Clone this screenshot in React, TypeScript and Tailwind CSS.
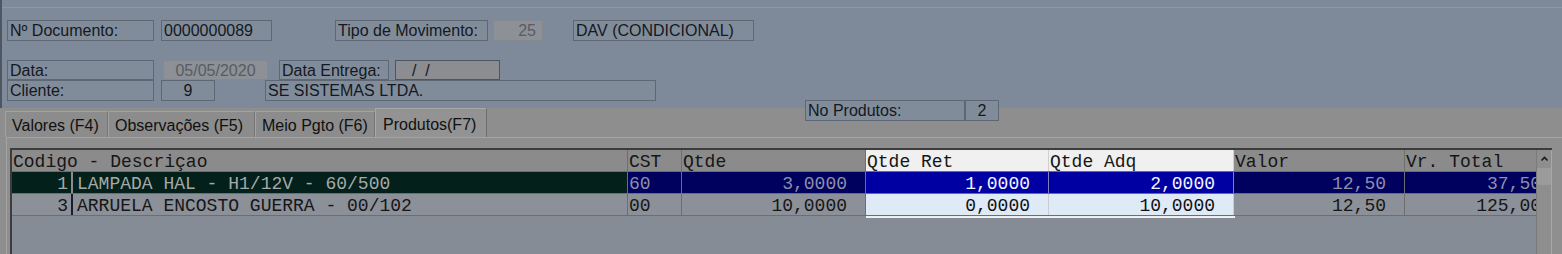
const Box = ({
  w,
  h = 21,
  ml = 0,
  children,
  variant = "label",
  align = "left",
}: {
  w: number;
  h?: number;
  ml?: number;
  children?: React.ReactNode;
  variant?: "label" | "disabled" | "input";
  align?: "left" | "right" | "center";
}) => {
  const styles = {
    label: "bg-[#818c9b] border-[#5f6774] text-[#141820]",
    disabled: "bg-[#8d9096] border-[#858a92] text-[#575c64]",
    input: "bg-[#8b8d90] border-[#4f5560] text-[#141820]",
  }[variant];
  const al = { left: "justify-start pl-[2px]", right: "justify-end pr-[6px]", center: "justify-center" }[align];
  return (
    <div
      className={`flex items-center pt-px border whitespace-nowrap overflow-hidden leading-none text-[16px] ${styles} ${al}`}
      style={{ width: w, height: h, marginLeft: ml }}
    >
      {children}
    </div>
  );
};

const cols = [
  { key: "cst", title: "CST", w: 54 },
  { key: "qtde", title: "Qtde", w: 184 },
  { key: "ret", title: "Qtde Ret", w: 183, hi: true },
  { key: "adq", title: "Qtde Adq", w: 185, hi: true },
  { key: "valor", title: "Valor", w: 171 },
  { key: "total", title: "Vr. Total", w: 151 },
];

const rows = [
  { cod: "1", desc: "LAMPADA HAL - H1/12V - 60/500", cst: "60", qtde: "3,0000", ret: "1,0000", adq: "2,0000", valor: "12,50", total: "37,50" },
  { cod: "3", desc: "ARRUELA ENCOSTO GUERRA - 00/102", cst: "00", qtde: "10,0000", ret: "0,0000", adq: "10,0000", valor: "12,50", total: "125,00" },
];

const tabs = [
  { t: "Valores (F4)", w: 103 },
  { t: "Observações (F5)", w: 147 },
  { t: "Meio Pgto (F6)", w: 120 },
];

export default function App() {
  return (
    <div className="relative w-[1562px] h-[254px] overflow-hidden bg-[#8e8e8e] font-['Liberation_Sans',Arial,sans-serif]">
      {/* cabeçalho do documento */}
      <div className="h-[108px] bg-[#7e899a] border-l-2 border-[#4e5664]">
        <div className="pt-[7px]">
          <div className="h-px bg-[#8d97a6]" />
        </div>
        <div className="flex mt-[12px] ml-[5px]">
          <Box w={147}>Nº Documento:</Box>
          <Box w={111} ml={7}>0000000089</Box>
          <Box w={153} ml={63}>Tipo de Movimento:</Box>
          <Box w={50} ml={5} variant="disabled" align="right">25</Box>
          <Box w={181} ml={30}>DAV (CONDICIONAL)</Box>
        </div>
        <div className="flex mt-[19px] ml-[5px]">
          <Box w={147} h={20}>Data:</Box>
          <Box w={105} h={20} ml={9} variant="disabled" align="center">05/05/2020</Box>
          <Box w={110} h={20} ml={11}>Data Entrega:</Box>
          <Box w={105} h={20} ml={6} variant="input">
            <span className="pl-[14px]">/&nbsp;&nbsp;/</span>
          </Box>
        </div>
        <div className="flex ml-[5px]">
          <Box w={147}>Cliente:</Box>
          <Box w={54} ml={7} align="center">9</Box>
          <Box w={391} ml={50}>SE SISTEMAS LTDA.</Box>
        </div>
      </div>

      {/* No Produtos */}
      <div className="absolute top-[100px] left-[805px] flex">
        <Box w={160}>No Produtos:</Box>
        <Box w={34} align="center">2</Box>
      </div>

      {/* abas */}
      <div className="h-[29px] flex items-end pl-[5px] text-[16px] text-[#101010]">
        {tabs.map((t) => (
          <div
            key={t.t}
            className="h-[26px] shrink-0 flex items-center pl-[6px] pt-[2px] border-t border-l border-r border-t-[#a2a2a2] border-l-[#a2a2a2] border-r-[#767676] bg-[#8c8c8c] whitespace-nowrap"
            style={{ width: t.w }}
          >
            {t.t}
          </div>
        ))}
        <div className="h-[29px] w-[112px] shrink-0 flex items-start pt-[4px] pl-[7px] border-t border-l border-r border-t-[#a8a8a8] border-l-[#a8a8a8] border-r-[#6e6e6e] bg-[#939393] whitespace-nowrap">
          Produtos(F7)
        </div>
      </div>

      {/* folha da aba */}
      <div className="ml-[6px] h-[117px] border-t border-l border-[#a4a4a4] bg-[#8f8f8f] pt-[10px] pl-[3px]">
        <div className="flex w-[1542px] h-[108px] border-t-2 border-l-2 border-[#3c3c3c] bg-[#868c95] font-['Liberation_Mono','Courier_New',monospace] text-[18px] leading-none">
          <div className="w-[1524px] overflow-hidden">
            {/* header */}
            <div className="flex h-[22px] bg-[#8b8b8b] text-[#161616] border-b border-[#6e6e6e]">
              <div className="w-[616px] shrink-0 flex items-center pt-[2px] pl-[1px] border-r border-[#6e6e6e] whitespace-pre">
                Codigo - Descriçao
              </div>
              {cols.map((c) => (
                <div
                  key={c.key}
                  className={`shrink-0 flex items-center pt-[2px] pl-[1px] border-r whitespace-pre ${
                    c.hi ? "bg-[#f0f0f0] border-[#d0d0d0]" : "border-[#6e6e6e]"
                  }`}
                  style={{ width: c.w }}
                >
                  {c.title}
                </div>
              ))}
            </div>
            {rows.map((r, i) => {
              const sel = i === 0;
              return (
                <div key={r.cod} className={`flex h-[22px] border-b border-[#6e6e6e] ${sel ? "" : "bg-[#8b9099] text-[#161616]"}`}>
                  <div className={`w-[616px] shrink-0 flex items-center border-r border-[#6e6e6e] whitespace-pre ${sel ? "bg-[#03201b] text-[#a6a9a8]" : ""}`}>
                    <span className={`w-[61px] shrink-0 h-full flex items-center pt-[2px] justify-end pr-[3px] border-r-2 ${sel ? "border-[#8c8c8c]" : "border-[#1b1e2a]"}`}>
                      {r.cod}
                    </span>
                    <span className="pl-[4px] pt-[2px]">{r.desc}</span>
                  </div>
                  {cols.map((c) => {
                    const v = r[c.key as keyof typeof r];
                    let cls = "";
                    if (sel) cls = c.hi ? "bg-[#0000a2] text-[#f4f4ff] border-[#8080c0]" : "bg-[#00005e] text-[#8e8fa6] border-[#6e6e6e]";
                    else cls = c.hi ? "bg-[#dfeaf7] text-[#101010] border-[#c8cdd4]" : "border-[#6e6e6e]";
                    const pad =
                      c.key === "cst" ? "justify-start pl-[1px]" : c.key === "total" ? "justify-end pr-[14px]" : "justify-end pr-[18px]";
                    return (
                      <div
                        key={c.key}
                        className={`shrink-0 flex items-center pt-[2px] border-r whitespace-pre ${pad} ${cls}`}
                        style={{ width: c.w }}
                      >
                        {v}
                      </div>
                    );
                  })}
                </div>
              );
            })}
            <div className="flex">
              <div className="w-[854px] shrink-0" />
              <div className="w-[369px] h-[2px] bg-[#f0f0f0]" />
            </div>
          </div>
          {/* barra de rolagem */}
          <div className="w-[15px] h-full bg-[#8e8e8e] border-l border-[#7a7a7a] flex flex-col items-center">
            <svg width="9" height="14" viewBox="0 0 9 14" className="mt-[2px]">
              <path d="M1.5 8.5 L4.5 5.5 L7.5 8.5" fill="none" stroke="#1a1a1a" strokeWidth="1.6" />
            </svg>
            <div className="w-[14px] h-[17px] mt-[2px] bg-[#9b9b9b]" />
          </div>
          <div className="flex-1 border-l border-[#a8a8a8]" />
        </div>
      </div>
    </div>
  );
}
